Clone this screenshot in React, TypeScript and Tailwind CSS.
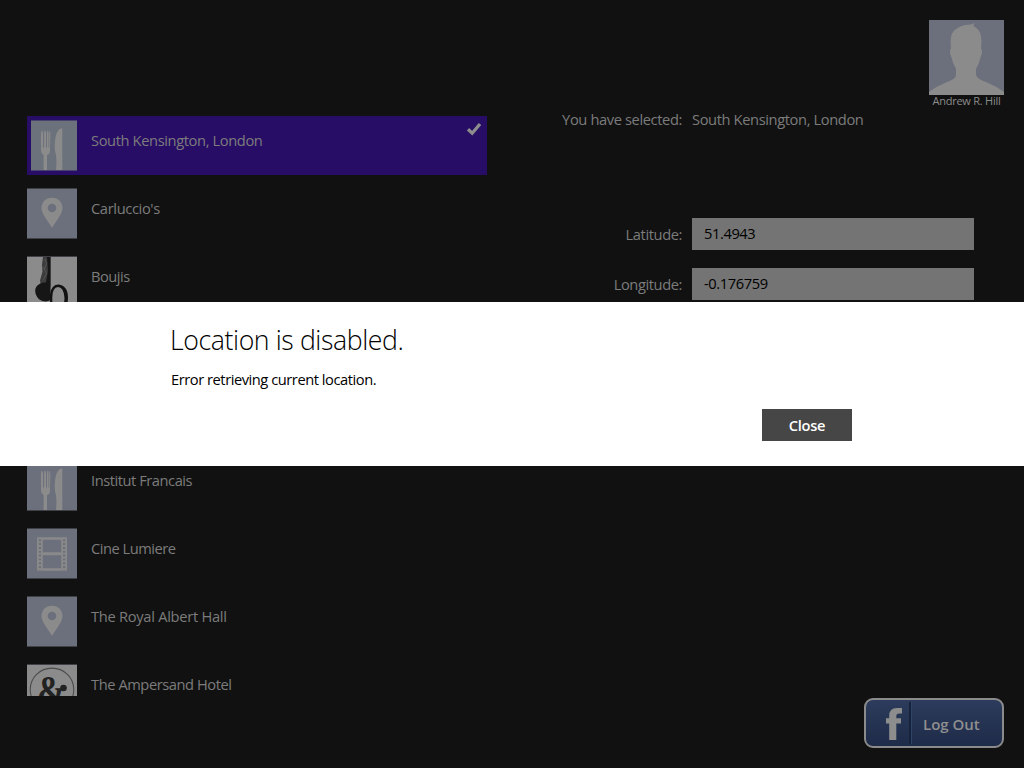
import React from "react";

type Kind = "food" | "pin" | "boujis" | "film" | "amp" | "blank";

const art: Record<Kind, React.ReactNode> = {
  food: (
    <g fill="#8b8b8b">
      <path d="M14 15Q14 10 15 10Q16 10 16 15V27H17.1V14Q17.1 10 18 10Q19 10 19 14V27H20V14Q20 10 20.8 10Q21.5 10 21.5 14V27H22.2V15Q22.2 10 22.8 10Q23.3 10 23.3 15L23 30Q23 33.5 20 35V50H16.6V35Q14 33.5 14 30Z" />
      <path d="M35.3 7.5V50H29Q29.9 41 29 35Q27.7 31 27.7 25Q28.3 8 35.3 7.5Z" />
    </g>
  ),
  pin: (
    <path
      fill="#8b8b8b"
      fillRule="evenodd"
      d="M25 9C18.6 9 14.5 13.8 14.5 19.5C14.5 24.5 19 30.5 25 39.5C31 30.5 35.5 24.5 35.5 19.5C35.5 13.8 31.4 9 25 9ZM25 15A4.3 4.3 0 1 1 25 23.6A4.3 4.3 0 0 1 25 15Z"
    />
  ),
  boujis: (
    <g>
      <rect width="50" height="50" fill="#8b8b8b" />
      <path d="M16 0H23.5V30H14L13 24L15.5 15L15 8Z" fill="#3c3c3c" />
      <path d="M20 0H23.5V44Q18 47 12 43Q7 38 8.5 32Q11 26 19 26L21 14Z" fill="#161616" />
      <path d="M18 2l1.5 5-2 5 2 5-3.5 7M16 10l2 3" stroke="#5a5a5a" strokeWidth="0.8" fill="none" />
      <path d="M23 46V38Q24.5 28 31.5 28Q41 29 41 42Q41 50 36 55L34 53Q38 48 37.4 41Q36.5 30.5 31 30.5Q25.5 31 25.3 41V47Z" fill="#111" />
    </g>
  ),
  film: (
    <g>
      <path fillRule="evenodd" fill="#898989" d="M10 8.5H40V42.5H10ZM15.8 11V23.8H34.2V11ZM15.8 26.7V40H34.2V26.7Z" />
      <path d="M12.9 10.5V42M37.1 10.5V42" stroke="#6c707c" strokeWidth="2.2" strokeDasharray="2 1.9" />
    </g>
  ),
  amp: (
    <g>
      <rect width="50" height="50" fill="#8b8b8b" />
      <circle cx="25" cy="25" r="21.8" fill="none" stroke="#4c4c4c" strokeWidth="1.1" />
      <text
        transform="translate(10 40.5) scale(0.8 1)"
        fontSize="43"
        fontWeight="700"
        fontFamily="Liberation Serif, serif"
        fill="#222"
      >
        &amp;
      </text>
      <circle cx="36.5" cy="23.5" r="3.3" fill="#222" />
    </g>
  ),
  blank: null,
};

function Thumb({ kind, selected }: { kind: Kind; selected?: boolean }) {
  return (
    <svg
      viewBox={selected ? "4 0 46 50" : "0 0 50 50"}
      preserveAspectRatio="none"
      className={
        selected
          ? "ml-1 h-[51px] w-[46px] shrink-0 border-y border-[#4a4372] bg-[#6c727b] bg-clip-padding"
          : "h-[51px] w-[50px] shrink-0 border-y border-[#3f4147] bg-[#6c707c] bg-clip-padding"
      }
    >
      {art[kind]}
    </svg>
  );
}

const places: { name: string; kind: Kind; tracking: string }[] = [
  { name: "South Kensington, London", kind: "food", tracking: "tracking-[-0.38px]" },
  { name: "Carluccio's", kind: "pin", tracking: "tracking-[-0.36px]" },
  { name: "Boujis", kind: "boujis", tracking: "tracking-[-0.5px]" },
  { name: "", kind: "blank", tracking: "" },
  { name: "", kind: "blank", tracking: "" },
  { name: "Institut Francais", kind: "food", tracking: "tracking-[-0.45px]" },
  { name: "Cine Lumiere", kind: "film", tracking: "tracking-[-0.49px]" },
  { name: "The Royal Albert Hall", kind: "pin", tracking: "tracking-[-0.28px]" },
  { name: "The Ampersand Hotel", kind: "amp", tracking: "tracking-[-0.43px]" },
];

export default function App() {
  return (
    <div className="relative flex h-[768px] w-[1024px] overflow-hidden bg-[#111111] font-['Open_Sans','Noto_Sans',sans-serif] text-[14.67px] leading-5 text-[#7c7c7c]">
      <ul className="ml-[27px] mt-[116px] flex h-[580px] w-[460px] flex-col gap-[9px] overflow-hidden">
        {places.map((p, i) => (
          <li
            key={i}
            className={
              i === 0
                ? "relative flex h-[59px] shrink-0 bg-[#280d66] pt-1"
                : "relative flex h-[59px] shrink-0 pt-1"
            }
          >
            {p.kind !== "blank" && <Thumb kind={p.kind} selected={i === 0} />}
            <span className={`ml-[14px] mt-[10px] whitespace-nowrap ${p.tracking}`}>{p.name}</span>
            {i === 0 && (
              <svg viewBox="0 0 16 14" className="absolute right-[5px] top-[6px] h-[14px] w-[16px]">
                <path d="M2 7.3L6.2 11.2L14 2" fill="none" stroke="#8d8d8d" strokeWidth="3.3" />
              </svg>
            )}
          </li>
        ))}
      </ul>

      <main className="flex flex-1 flex-col">
        <div className="flex h-[109px] flex-col items-end pr-5 pt-5">
          <div className="flex w-[75px] flex-col items-center">
            <svg viewBox="0 0 75 75" className="h-[75px] w-[75px] bg-[#6c707c]">
              <path
                fill="#8b8b8b"
                d="M0 75V72Q8 66 18 62Q27 59 27 55V49Q23.5 43 22.7 38Q20.5 34 21 30L22 29Q21 18 23 13.5Q29 4.5 42 4.5L45.5 3L44.5 6Q50 9 51.5 14Q53 20 52 29L53 30Q53.5 34 51.3 38Q50.5 43 47 49V55Q48 59 57 62Q67 66 75 72V75Z"
              />
            </svg>
            <span className="-mt-px whitespace-nowrap text-[11px] leading-[13px] tracking-[-0.25px] text-[#8b8b8b]">Andrew R. Hill</span>
          </div>
        </div>
        <div className="ml-[45px] flex h-[109px] gap-[10px]">
          <span className="w-[150px] whitespace-nowrap text-right tracking-[-0.38px]">You have selected:</span>
          <span className="whitespace-nowrap tracking-[-0.38px]">South Kensington, London</span>
        </div>
        <div className="ml-[45px] flex flex-col gap-[18px]">
          {[
            ["Latitude:", "51.4943"],
            ["Longitude:", "-0.176759"],
          ].map(([label, value]) => (
            <div key={label} className="flex h-8 gap-[10px]">
              <span className="w-[150px] pt-[6px] text-right tracking-[-0.4px]">{label}</span>
              <span className="w-[282px] bg-[#747474] pl-3 pt-[5px] tracking-[-0.4px] text-black">{value}</span>
            </div>
          ))}
        </div>
        <button className="mb-5 mr-5 mt-auto flex h-[50px] w-[140px] items-center self-end rounded-[9px] border-2 border-[#8b8b8b] bg-gradient-to-b from-[#2d3c5c] to-[#1e2b49] text-[#8f8f8f]">
          <svg viewBox="0 0 17 32" className="ml-[19.5px] mt-[2px] h-8 w-[17px]">
            <path fill="#8d8d8d" d="M16 0H11Q3.2 0 3.2 8V10.3H0V15.5H3.2V32H10.3V15.5H15V10.3H10.3V8Q10.3 5.4 13 5.4H16Z" />
          </svg>
          <span className="ml-[6.5px] h-[42px] w-[3px] border-l-2 border-r border-l-[#16213a] border-r-[#304468]" />
          <span className="ml-[11px] mt-[2px] whitespace-nowrap text-[15px] font-semibold">Log Out</span>
        </button>
      </main>

      <section role="dialog" className="absolute inset-x-0 top-[302px] flex h-[164px] flex-col bg-white pl-[170px] pr-[172px] pt-[20px] text-black">
        <h1 className="whitespace-nowrap text-[26.67px] font-light leading-9 tracking-[-0.4px]">Location is disabled.</h1>
        <p className="ml-px mt-[11px] whitespace-nowrap text-[14.67px] tracking-[-0.45px]">Error retrieving current location.</p>
        <button className="mt-5 h-8 w-[90px] self-end bg-[#464646] text-[14.67px] font-semibold tracking-[-0.3px] text-white">Close</button>
      </section>
    </div>
  );
}
